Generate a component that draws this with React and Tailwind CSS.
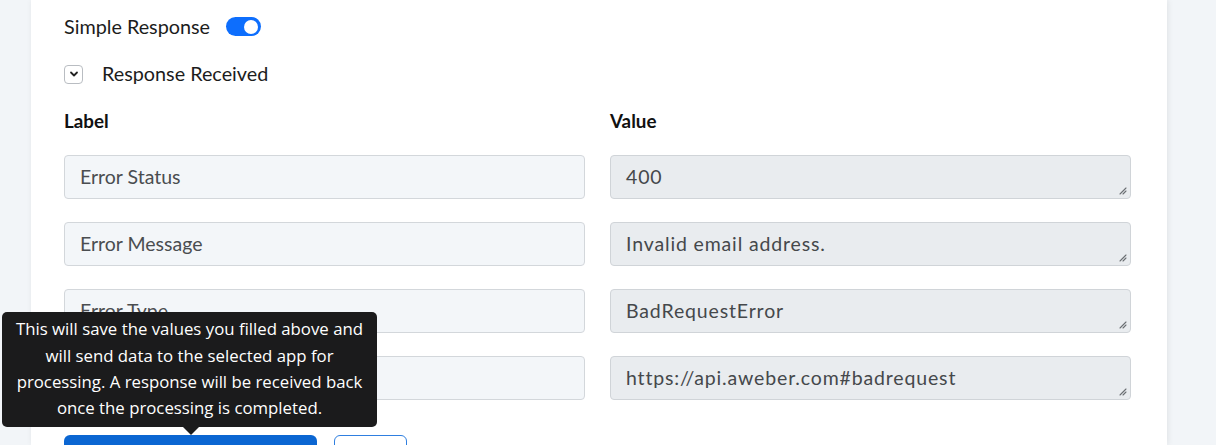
import React from 'react';

const rows = [
  { label: 'Error Status', value: '400' },
  { label: 'Error Message', value: 'Invalid email address.' },
  { label: 'Error Type', value: 'BadRequestError' },
  { label: 'Error Documentation Url', value: 'https://api.aweber.com#badrequest' },
];

const ResizeGrip = () => (
  <svg className="absolute right-[3px] bottom-[3px] w-[9px] h-[9px]" viewBox="0 0 9 9">
    <path d="M8 2 L2 8 M8 5 L5 8" stroke="#6b6f73" strokeWidth="1.1" strokeLinecap="round" />
  </svg>
);

const App = () => {
  return (
    <div className="w-[1216px] h-[445px] overflow-hidden bg-[#f2f5f8] font-['Lato',sans-serif]">
      <div className="relative ml-[31px] w-[1136px] h-full bg-white shadow-[1px_0_6px_rgba(0,0,0,0.08)] pl-[33px]">
        {/* Simple response toggle */}
        <div className="flex items-center h-[54px] pb-[1px]">
          <span className="text-[19.8px] text-[#1c1c1c]">Simple Response</span>
          <span className="ml-[16px] w-[35px] h-[19px] rounded-full bg-[#0d6efd] flex items-center justify-end pr-[3px]">
            <span className="w-[14px] h-[14px] rounded-full bg-white" />
          </span>
        </div>

        {/* Response received */}
        <div className="flex items-center h-[40px]">
          <span className="w-[19px] h-[19px] rounded-[4px] border border-[#b9bdc2] flex items-center justify-center">
            <svg width="10" height="10" viewBox="0 0 10 10">
              <path d="M2 3.5 L5 6.5 L8 3.5" fill="none" stroke="#222" strokeWidth="1.8" strokeLinecap="round" strokeLinejoin="round" />
            </svg>
          </span>
          <span className="ml-[19px] text-[19.8px] text-[#1c1c1c]">Response Received</span>
        </div>

        <div className="w-[1067px]">
          {/* Headers */}
          <div className="grid grid-cols-2 gap-x-[25px] mt-[5px] h-[44px] items-center">
            <div className="text-[18.8px] font-bold text-[#111]">Label</div>
            <div className="text-[18.8px] font-bold text-[#111]">Value</div>
          </div>

          <div className="grid grid-cols-2 gap-x-[25px] gap-y-[23px] mt-[12px]">
            {rows.map((r) => (
              <React.Fragment key={r.label}>
                <div className="h-[44px] rounded-[4px] border border-[#d3d7db] bg-[#f3f6f9] flex items-center px-[15px] text-[19.5px] text-[#4a4d50]">
                  {r.label}
                </div>
                <div className="relative h-[44px] rounded-[4px] border border-[#d0d4d8] bg-[#e9ecef] flex items-center px-[15px] text-[19.5px] tracking-[0.85px] text-[#45484b]">
                  {r.value}
                  <ResizeGrip />
                </div>
              </React.Fragment>
            ))}
          </div>

          {/* Action buttons */}
          <div className="flex items-start gap-[17px] mt-[35px]">
            <div className="w-[253px] h-[40px] rounded-[6px] bg-[#0b66d2]" />
            <div className="w-[73px] h-[40px] rounded-[6px] border border-[#2f7fe0] bg-white" />
          </div>
        </div>
      </div>

      {/* Tooltip over the save button */}
      <div className="absolute left-[2px] top-[312px] w-[375px] h-[115px] rounded-[5px] bg-[#1b1b1c] flex items-center justify-center text-center text-white text-[16.8px] leading-[26.3px] font-['Open_Sans',sans-serif]">
        <p className="pb-[1px]">
          This will save the values you filled above and<br />
          will send data to the selected app for<br />
          processing. A response will be received back<br />
          once the processing is completed.
        </p>
        <span className="absolute left-[181px] bottom-[-8px] w-0 h-0 border-l-[8px] border-r-[8px] border-t-[8px] border-l-transparent border-r-transparent border-t-[#1b1b1c]" />
      </div>
    </div>
  );
};

export default App;
